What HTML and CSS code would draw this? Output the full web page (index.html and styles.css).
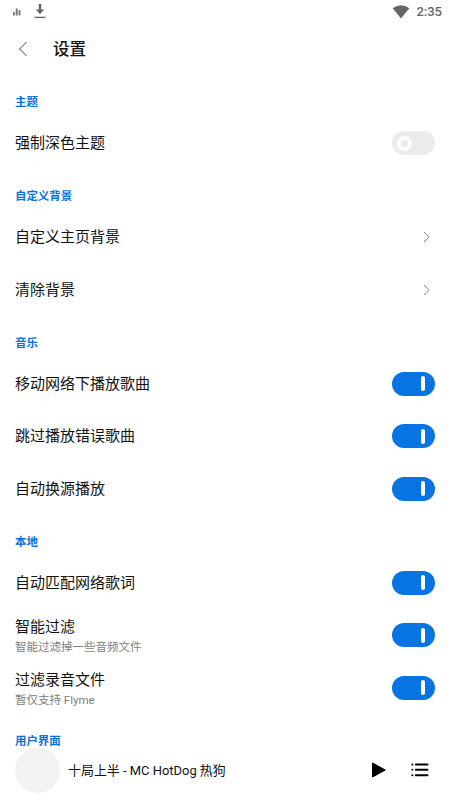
FILE: index.html
```html
<!DOCTYPE html>
<html lang="zh-CN">
<head>
<meta charset="utf-8">
<title>设置</title>
<link rel="stylesheet" href="styles.css">
</head>
<body>
<div class="screen">
  <div class="status">
    <svg class="bars" width="8" height="8" viewBox="0 0 8 8" fill="#707070"><rect x="0" y="4" width="1.7" height="3.5"/><rect x="2.7" y="0.5" width="1.9" height="7"/><rect x="5.6" y="2.2" width="1.8" height="5.3"/></svg>
    <svg class="download" width="12" height="15" viewBox="0 0 12 15"><path d="M4.8 0h2.4v5.5h3L6 10.2 1.8 5.5h3z" fill="#666"/><path d="M.5 13.4h11" stroke="#666" stroke-width="1.4"/></svg>
    <svg class="wifi" width="18" height="14" viewBox="0 0 18 14"><path d="M.7 3.2Q9-2.6 17.3 3.2L9 13.4z" fill="#666"/></svg>
    <span class="time">2:35</span>
  </div>
  <header class="header">
    <svg width="10" height="16" viewBox="0 0 10 16" fill="none" stroke="#858585" stroke-width="1.1"><path d="M8.6 1.2L1.5 8l7.1 6.8"/></svg>
    <h1 class="title">设置</h1>
  </header>
  <main class="settings">
    <h2 class="section">主题</h2>
    <div class="row"><span>强制深色主题</span><i class="switch off"></i></div>
    <h2 class="section">自定义背景</h2>
    <div class="row"><span>自定义主页背景</span><svg class="chevron" viewBox="0 0 8 12"><path d="M1 1l5.2 5L1 11"/></svg></div>
    <div class="row"><span>清除背景</span><svg class="chevron" viewBox="0 0 8 12"><path d="M1 1l5.2 5L1 11"/></svg></div>
    <h2 class="section">音乐</h2>
    <div class="row"><span>移动网络下播放歌曲</span><i class="switch"></i></div>
    <div class="row"><span>跳过播放错误歌曲</span><i class="switch"></i></div>
    <div class="row"><span>自动换源播放</span><i class="switch"></i></div>
    <h2 class="section">本地</h2>
    <div class="row"><span>自动匹配网络歌词</span><i class="switch"></i></div>
    <div class="row"><div class="double"><span>智能过滤</span><small>智能过滤掉一些音频文件</small></div><i class="switch"></i></div>
    <div class="row"><div class="double"><span>过滤录音文件</span><small>暂仅支持 Flyme</small></div><i class="switch"></i></div>
    <h2 class="section">用户界面</h2>
  </main>
  <footer class="player">
    <div class="cover"></div>
    <span class="song">十局上半 - MC HotDog 热狗</span>
    <svg class="play" width="16" height="18" viewBox="0 0 16 18"><path d="M1.5 2v14L14.3 9z" stroke="#000" stroke-width="1" stroke-linejoin="round"/></svg>
    <svg width="18" height="15" viewBox="0 0 18 15" stroke="#000" stroke-width="2" stroke-linecap="round"><path d="M1.3 1.4h.1M4.8 1.4h11.7M1.3 6.8h.1M4.8 6.8h11.7M1.3 12.2h.1M4.8 12.2h11.7"/></svg>
  </footer>
</div>
</body>
</html>
```
FILE: styles.css
```css
*, *::after { box-sizing: border-box; }
body { margin: 0; background: #fff; color: #111; font-family: Roboto, "Noto Sans CJK SC", sans-serif; }
.screen { display: flex; flex-direction: column; height: 800px; overflow: hidden; }
.status { display: flex; align-items: center; height: 23px; padding: 0 8px 0 13px; }
.download { margin-left: 13px; }
.wifi { margin-left: auto; }
.time { margin-left: 6px; color: #666; font-size: 13px; font-weight: 500; }
.header { display: flex; align-items: center; height: 52.25px; padding-left: 18px; }
.title { margin: 2px 0 0 25px; font-size: 16.5px; line-height: 24px; font-weight: 500; color: #111; }
.settings { padding: 0 15px; height: 672.25px; flex: none; }
.section { margin: 0; height: 41.5px; padding-top: 19px; font-size: 11.45px; line-height: 17px; font-weight: 700; color: #0873df; }
.row { display: flex; align-items: center; justify-content: space-between; height: 52.5px; font-size: 15px; line-height: 22px; }
.double { display: flex; flex-direction: column; padding-top: 2px; }
.double small { color: #808080; font-size: 11.5px; line-height: 17px; margin-top: 1px; }
.switch { display: flex; align-items: center; justify-content: flex-end; width: 43px; height: 24px; padding: 0 10px; border-radius: 12px; background: #0873e3; }
.switch::after { content: ""; width: 4px; height: 15px; border-radius: 2px; background: #fff; }
.switch.off { justify-content: flex-start; padding: 0 4.5px; background: #ebebeb; }
.switch.off::after { width: 15px; height: 15px; border: 4.5px solid #fff; border-radius: 50%; background: #ebebeb; }
.chevron { width: 8px; height: 12px; margin-right: 4px; fill: none; stroke: #888; stroke-width: 1; }
.player { display: flex; align-items: center; height: 45px; flex: none; padding: 0 21px 0 15px; }
.cover { width: 45px; height: 45px; border-radius: 50%; background: #f2f2f2; }
.song { margin-left: 8px; padding-top: 1px; font-size: 12.95px; line-height: 20px; }
.play { margin-left: auto; margin-right: 24px; }
```
